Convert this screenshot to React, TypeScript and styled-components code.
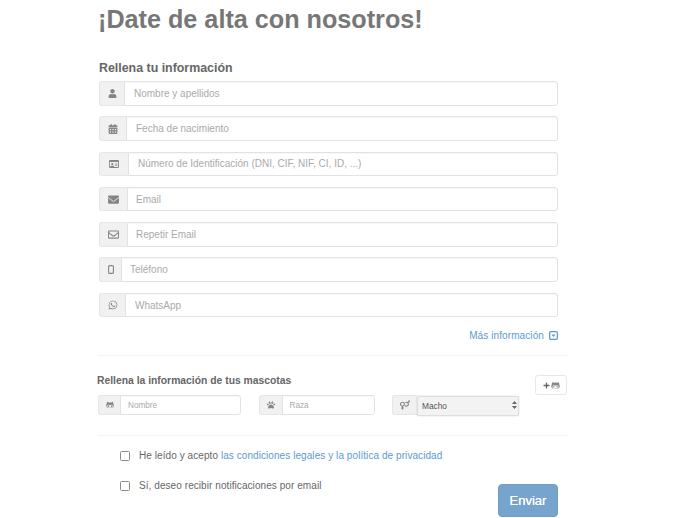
import React from 'react';
import styled, { createGlobalStyle } from 'styled-components';
import { FaUser, FaCalendarAlt, FaRegIdCard, FaEnvelope, FaRegEnvelope, FaWhatsapp, FaGithubAlt, FaPaw, FaVenusMars, FaPlus } from 'react-icons/fa';

const Global = createGlobalStyle`
  html, body { margin: 0; padding: 0; background: #fff; }
  body { font-family: "Liberation Sans", Arial, sans-serif; color: #666; width: 682px; height: 518px; overflow: hidden; }
  ::placeholder { color: #aaa; opacity: 1; }
`;

const Page = styled.main`
  display: flex; flex-direction: column; padding: 4px 114px 0 98px; height: 518px; box-sizing: border-box;
`;
const Title = styled.h1`
  margin: 0 0 27px; font-size: 25.2px; line-height: 30px; font-weight: 700; color: #777;
`;
const Heading = styled.h2`
  margin: 0 0 5px 1px; font-size: 12.4px; line-height: 15px; font-weight: 700; color: #666;
`;
const Fields = styled.div`
  display: flex; flex-direction: column; gap: 10.8px; margin-left: 1px; width: 459px;
`;
const Group = styled.div<{ $w?: number }>`
  display: flex; height: 24.5px; box-sizing: border-box; ${p => p.$w ? `width:${p.$w}px;` : ''}
`;
const Addon = styled.span<{ $w: number }>`
  display: flex; align-items: center; justify-content: center; width: ${p => p.$w}px; flex: none;
  box-sizing: border-box; background: #f1f1f1; border: 1px solid #e6e6e6; border-right: 0;
  border-radius: 3px 0 0 3px; color: #858585;
`;
const Input = styled.input<{ $pad?: number; $small?: boolean }>`
  flex: 1; min-width: 0; box-sizing: border-box; height: 100%; border: 1px solid #e2e2e2; border-radius: 0 3px 3px 0;
  padding: 0 0 0 ${p => p.$pad ?? 10}px; font: ${p => p.$small ? '8.2px' : '10px'} "Liberation Sans", Arial, sans-serif;
  color: #555; background: #fff; outline: none;
  box-shadow: inset 0 1px 1px rgba(0,0,0,.03);
`;
const MoreRow = styled.div`
  display: flex; justify-content: flex-end; align-items: center; gap: 5px; width: 460px;
  margin-top: 12px; font-size: 10px; line-height: 14px; color: #5b9bd0; letter-spacing: 0.1px;
`;
const DownBox = styled.svg`width: 9px; height: 9px; display: block; margin-top: -1px;`;
const PhoneIcon = styled.svg`width: 6px; height: 9px; display: block;`;
const Rule = styled.hr<{ $top: number }>`
  width: 470px; margin: ${p => p.$top}px 0 0; border: 0; border-top: 1px solid #f3f3f3; height: 0;
`;
const PetTitle = styled.h3`
  margin: 18px 0 0 -1px; font-size: 10.35px; line-height: 14px; font-weight: 700; color: #666;
`;
const PetSection = styled.section`
  display: flex; flex-direction: column; position: relative;
`;
const PetRow = styled.div`
  display: flex; margin-top: 7px; gap: 17.5px; height: 20px;
`;
const PetGroup = styled(Group)`height: 20px;`;
const SelectWrap = styled.span`
  position: relative; flex: 1; min-width: 0; height: 20px; display: block;
`;
const Select = styled.select`
  appearance: none; width: 100%; height: 20px; box-sizing: border-box; border: 1px solid #dedede; border-radius: 2px;
  font: 8.3px "Liberation Sans", Arial, sans-serif; color: #555; background: #f3f3f3; padding: 0 0 0 4px;
  box-shadow: 0 0 1.5px rgba(0,0,0,.22); outline: none;
`;
const Arrows = styled.svg`
  position: absolute; right: 2px; top: 6px; width: 5px; height: 8px; pointer-events: none;
`;
const AddButton = styled.button`
  position: absolute; right: 1px; top: 19px; width: 32px; height: 20px; box-sizing: border-box;
  background: #fff; border: 1px solid #e8e8e8; border-radius: 3px; color: #666;
  display: flex; align-items: center; justify-content: center; gap: 1px; padding: 0;
`;
const Checks = styled.div`
  display: flex; flex-direction: column; gap: 18px; margin: 14px 0 0 22px;
`;
const CheckRow = styled.label`
  display: flex; align-items: center; gap: 9px; font-size: 10px; line-height: 12px; color: #666; letter-spacing: .07px;
`;
const Box = styled.span`
  width: 8px; height: 8px; border: 1px solid #8a8a8a; border-radius: 1.5px; background: #fff; flex: none;
`;
const Link = styled.a`color: #5b9bd0; text-decoration: none;`;
const Footer = styled.div`
  display: flex; justify-content: flex-end; width: 460px; margin-top: -8px;
`;
const Submit = styled.button`
  width: 60px; height: 33px; background: #77a4cd; color: #fff; border: 1px solid #6f9dc7; border-radius: 4px;
  font: 13px "Liberation Sans", Arial, sans-serif; text-shadow: 0 0 .4px #fff;
`;

const rows = [
  { w: 25, pad: 9, icon: <FaUser size={9} />, ph: 'Nombre y apellidos' },
  { w: 27, pad: 9, icon: <FaCalendarAlt size={10} />, ph: 'Fecha de nacimiento' },
  { w: 29, pad: 9, icon: <FaRegIdCard size={10} />, ph: 'Número de Identificación (DNI, CIF, NIF, CI, ID, ...)' },
  { w: 28, pad: 8, icon: <FaEnvelope size={11} />, ph: 'Email' },
  { w: 28, pad: 8, icon: <FaRegEnvelope size={11} />, ph: 'Repetir Email' },
  {
    w: 22, pad: 8, ph: 'Teléfono',
    icon: (
      <PhoneIcon viewBox="0 0 6 9">
        <rect x=".6" y=".6" width="4.8" height="7.8" rx="1" fill="none" stroke="currentColor" strokeWidth="1.1" />
      </PhoneIcon>
    ),
  },
  { w: 26, pad: 9, icon: <FaWhatsapp size={10} />, ph: 'WhatsApp' },
];

export default function App() {
  return (
    <Page>
      <Global />
      <Title>¡Date de alta con nosotros!</Title>
      <Heading>Rellena tu información</Heading>
      <Fields>
        {rows.map(r => (
          <Group key={r.ph}>
            <Addon $w={r.w}>{r.icon}</Addon>
            <Input $pad={r.pad} placeholder={r.ph} />
          </Group>
        ))}
      </Fields>
      <MoreRow>
        Más información
        <DownBox viewBox="0 0 10 10">
          <rect x=".7" y=".7" width="8.6" height="8.6" rx="1.5" fill="none" stroke="#5b9bd0" strokeWidth="1.4" />
          <path d="M2.7 3.8h4.6L5 6.7z" fill="#5b9bd0" />
        </DownBox>
      </MoreRow>
      <Rule $top={12} />
      <PetSection>
        <PetTitle>Rellena la información de tus mascotas</PetTitle>
        <PetRow>
          <PetGroup $w={143}>
            <Addon $w={22}><FaGithubAlt size={8} /></Addon>
            <Input $pad={7} $small placeholder="Nombre" />
          </PetGroup>
          <PetGroup $w={116}>
            <Addon $w={23}><FaPaw size={8} /></Addon>
            <Input $pad={7} $small placeholder="Raza" />
          </PetGroup>
          <PetGroup $w={127}>
            <Addon $w={25}><FaVenusMars size={10} /></Addon>
            <SelectWrap>
              <Select defaultValue="Macho"><option>Macho</option><option>Hembra</option></Select>
              <Arrows viewBox="0 0 5 8"><path d="M2.5 0L5 3H0zM2.5 8L0 5h5z" fill="#666" /></Arrows>
            </SelectWrap>
          </PetGroup>
        </PetRow>
        <AddButton aria-label="Añadir mascota"><FaPlus size={7} /><FaGithubAlt size={9} color="#888" /></AddButton>
      </PetSection>
      <Rule $top={20} />
      <Checks>
        <CheckRow><Box /><span>He leído y acepto <Link>las condiciones legales y la política de privacidad</Link></span></CheckRow>
        <CheckRow><Box />Sí, deseo recibir notificaciones por email</CheckRow>
      </Checks>
      <Footer><Submit>Enviar</Submit></Footer>
    </Page>
  );
}
